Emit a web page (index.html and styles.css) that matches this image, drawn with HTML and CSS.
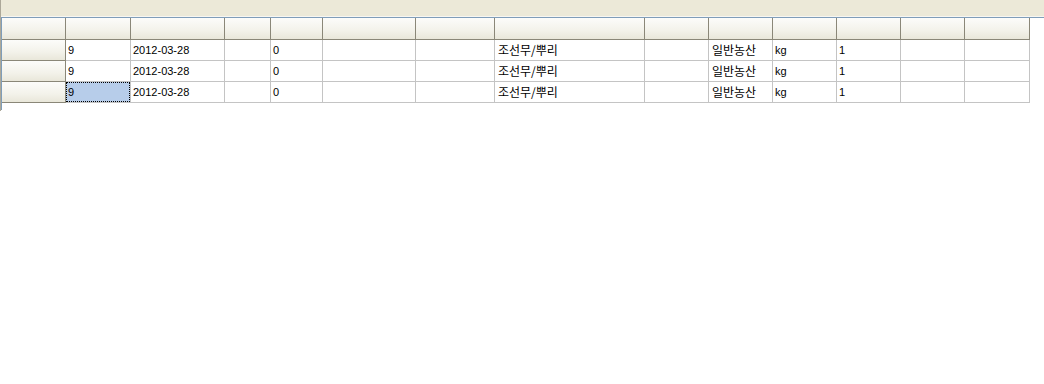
FILE: index.html
```html
<!DOCTYPE html>
<html>
<head>
<meta charset="utf-8">
<link rel="stylesheet" href="styles.css">
</head>
<body>
<div class="frame">
  <div class="toolbar"></div>
  <div class="panel">
    <div class="row head">
      <div class="rh"></div>
      <div class="c w1"></div><div class="c w2"></div><div class="c w3"></div><div class="c w4"></div>
      <div class="c w5"></div><div class="c w6"></div><div class="c w7"></div><div class="c w8"></div>
      <div class="c w9"></div><div class="c w10"></div><div class="c w11"></div><div class="c w12"></div>
      <div class="c w13"></div>
    </div>
    <div class="row">
      <div class="rh"></div>
      <div class="c w1">9</div><div class="c w2">2012-03-28</div><div class="c w3"></div><div class="c w4">0</div>
      <div class="c w5"></div><div class="c w6"></div><div class="c w7 ko">조선무/뿌리</div><div class="c w8"></div>
      <div class="c w9 ko">일반농산</div><div class="c w10">kg</div><div class="c w11">1</div><div class="c w12"></div>
      <div class="c w13"></div>
    </div>
    <div class="row">
      <div class="rh"></div>
      <div class="c w1">9</div><div class="c w2">2012-03-28</div><div class="c w3"></div><div class="c w4">0</div>
      <div class="c w5"></div><div class="c w6"></div><div class="c w7 ko">조선무/뿌리</div><div class="c w8"></div>
      <div class="c w9 ko">일반농산</div><div class="c w10">kg</div><div class="c w11">1</div><div class="c w12"></div>
      <div class="c w13"></div>
    </div>
    <div class="row">
      <div class="rh"></div>
      <div class="c w1 sel"><span class="focus">9</span></div><div class="c w2">2012-03-28</div><div class="c w3"></div><div class="c w4">0</div>
      <div class="c w5"></div><div class="c w6"></div><div class="c w7 ko">조선무/뿌리</div><div class="c w8"></div>
      <div class="c w9 ko">일반농산</div><div class="c w10">kg</div><div class="c w11">1</div><div class="c w12"></div>
      <div class="c w13"></div>
    </div>
  </div>
</div>
</body>
</html>
```

FILE: styles.css
```css
html, body {
  margin: 0;
  padding: 0;
  background: #ffffff;
}
body {
  width: 1044px;
  height: 384px;
  overflow: hidden;
  font-family: "Liberation Sans", Arial, sans-serif;
  font-size: 11px;
  color: #000;
}
.frame {
  border-left: 1px solid #aca899;
  height: 111px;
  box-sizing: border-box;
}
.toolbar {
  height: 16px;
  background: #ece9d8;
  border-bottom: 1px solid #f7f6f1;
}
.panel {
  border-top: 1px solid #7f9db9;
  border-left: 1px solid #7f9db9;
  height: 93px;
  box-sizing: border-box;
  margin-left: 0;
}
.row {
  display: flex;
  height: 21px;
}
.row.head {
  height: 22px;
}
.rh {
  width: 64px;
  flex: none;
  box-sizing: border-box;
  background: linear-gradient(#fcfcfa, #f3f2ea 60%, #e9e7da);
  border-right: 1px solid #8a8778;
  border-bottom: 1px solid #8a8778;
}
.c {
  flex: none;
  box-sizing: border-box;
  border-right: 1px solid #c4c4c4;
  border-bottom: 1px solid #c4c4c4;
  padding-left: 2px;
  line-height: 20px;
  white-space: nowrap;
  overflow: hidden;
}
.head .c {
  background: linear-gradient(#fcfcfa, #f3f2ea 60%, #e9e7da);
  border-right: 1px solid #8a8778;
  border-bottom: 1px solid #8a8778;
}
.ko {
  font-family: "Noto Sans CJK KR", "Noto Sans", sans-serif;
  font-size: 12px;
  padding-left: 3px;
}
.sel {
  background: #b7cdea;
  padding: 0;
}
.focus {
  display: block;
  height: 20px;
  line-height: 18px;
  box-sizing: border-box;
  border: 1px dotted #000;
  padding-left: 1px;
}
.w1 { width: 65px; }
.w2 { width: 94px; }
.w3 { width: 46px; }
.w4 { width: 52px; }
.w5 { width: 93px; }
.w6 { width: 79px; }
.w7 { width: 150px; }
.w8 { width: 64px; }
.w9 { width: 64px; }
.w10 { width: 64px; }
.w11 { width: 64px; }
.w12 { width: 64px; }
.w13 { width: 65px; }
```
